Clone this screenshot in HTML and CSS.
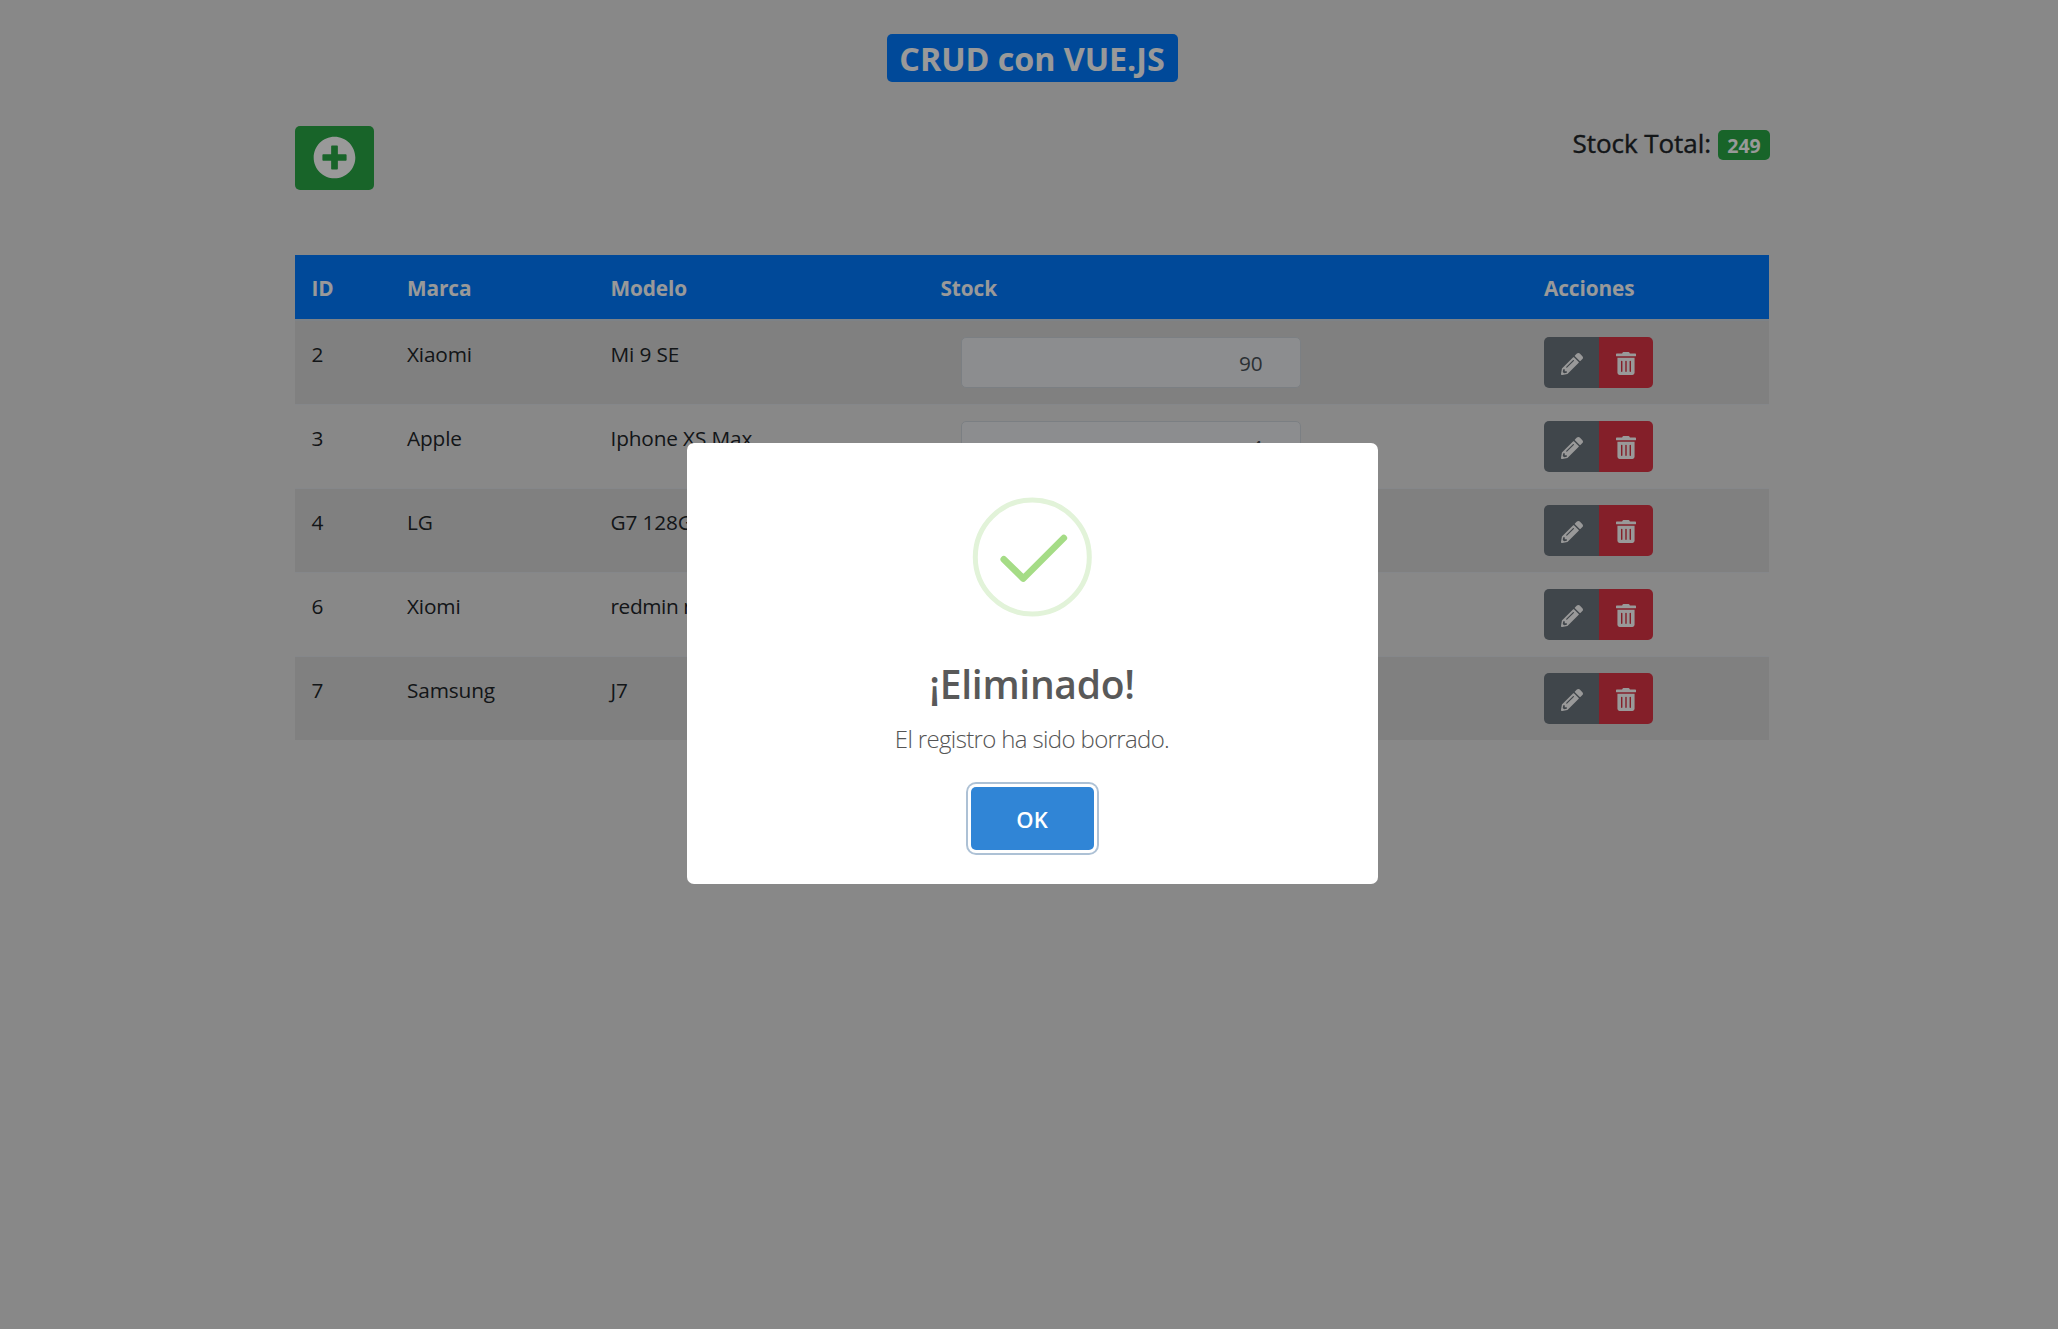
FILE: index.html
```
<!DOCTYPE html>
<html lang="es">
<head>
<meta charset="utf-8">
<title>CRUD con VUE.JS</title>
<link rel="stylesheet" href="styles.css">
</head>
<body>
<svg class="sprite" aria-hidden="true">
  <symbol id="plus" viewBox="0 0 512 512"><path d="M256 8C119 8 8 119 8 256s111 248 248 248 248-111 248-248S393 8 256 8zm144 276c0 6.6-5.4 12-12 12h-92v92c0 6.6-5.4 12-12 12h-56c-6.6 0-12-5.4-12-12v-92h-92c-6.6 0-12-5.4-12-12v-56c0-6.6 5.4-12 12-12h92v-92c0-6.6 5.4-12 12-12h56c6.6 0 12 5.4 12 12v92h92c6.6 0 12 5.4 12 12v56z"/></symbol>
  <symbol id="pencil" viewBox="0 0 512 512"><path d="M497.9 142.1l-46.1 46.1c-4.7 4.7-12.3 4.7-17 0l-111-111c-4.7-4.7-4.7-12.3 0-17l46.1-46.1c18.7-18.7 49.1-18.7 67.9 0l60.1 60.1c18.8 18.7 18.8 49.1 0 67.9zM284.2 99.8L21.6 362.4.4 483.9c-2.9 16.4 11.4 30.6 27.8 27.8l121.5-21.3 262.6-262.6c4.7-4.7 4.7-12.3 0-17l-111-111c-4.8-4.7-12.4-4.7-17.1 0zM124.1 339.9c-5.5-5.5-5.5-14.3 0-19.8l154-154c5.5-5.5 14.3-5.5 19.8 0s5.5 14.3 0 19.8l-154 154c-5.5 5.5-14.3 5.5-19.8 0zM88 424h48v36.3l-64.5 11.3-31.1-31.1L51.7 376H88v48z"/></symbol>
  <symbol id="trash" viewBox="0 0 448 512"><path d="M32 464a48 48 0 0 0 48 48h288a48 48 0 0 0 48-48V128H32zm272-256a16 16 0 0 1 32 0v224a16 16 0 0 1-32 0zm-96 0a16 16 0 0 1 32 0v224a16 16 0 0 1-32 0zm-96 0a16 16 0 0 1 32 0v224a16 16 0 0 1-32 0zM432 32H312l-9.4-18.7A24 24 0 0 0 281.1 0H166.8a23.7 23.7 0 0 0-21.4 13.3L136 32H16A16 16 0 0 0 0 48v32a16 16 0 0 0 16 16h416a16 16 0 0 0 16-16V48a16 16 0 0 0-16-16z"/></symbol>
</svg>
<main class="container">
  <h1 class="title"><span class="title-badge">CRUD con VUE.JS</span></h1>
  <div class="toolbar">
    <button class="add"><svg><use href="#plus"/></svg></button>
    <div class="total"><span class="total-label">Stock Total:</span><span class="total-badge">249</span></div>
  </div>
  <div class="table">
    <div class="row head"><div>ID</div><div>Marca</div><div>Modelo</div><div>Stock</div><div>Acciones</div></div>
    <div class="row odd"><div>2</div><div>Xiaomi</div><div>Mi 9 SE</div><div><span class="field">90</span></div><div class="actions"><button class="edit"><svg><use href="#pencil"/></svg></button><button class="delete"><svg><use href="#trash"/></svg></button></div></div>
    <div class="row"><div>3</div><div>Apple</div><div>Iphone XS Max</div><div><span class="field">4</span></div><div class="actions"><button class="edit"><svg><use href="#pencil"/></svg></button><button class="delete"><svg><use href="#trash"/></svg></button></div></div>
    <div class="row odd"><div>4</div><div>LG</div><div>G7 128GB</div><div><span class="field"></span></div><div class="actions"><button class="edit"><svg><use href="#pencil"/></svg></button><button class="delete"><svg><use href="#trash"/></svg></button></div></div>
    <div class="row"><div>6</div><div>Xiomi</div><div class="tight">redmin n</div><div><span class="field"></span></div><div class="actions"><button class="edit"><svg><use href="#pencil"/></svg></button><button class="delete"><svg><use href="#trash"/></svg></button></div></div>
    <div class="row odd"><div>7</div><div>Samsung</div><div>J7</div><div><span class="field"></span></div><div class="actions"><button class="edit"><svg><use href="#pencil"/></svg></button><button class="delete"><svg><use href="#trash"/></svg></button></div></div>
  </div>
</main>
<div class="backdrop">
  <section class="dialog" role="dialog">
    <svg class="success" viewBox="0 0 120 120"><circle cx="60.3" cy="60" r="57"/><path d="M31.8 62.3L51.3 81.5L91.8 41"/></svg>
    <h2><span>¡Eliminado!</span></h2>
    <p><span>El registro ha sido borrado.</span></p>
    <button class="ok">OK</button>
  </section>
</div>
</body>
</html>
```
FILE: styles.css
```
* { box-sizing: border-box; }
html { overflow: hidden; }
body {
  margin: 0;
  width: 2064px;
  height: 1329px;
  overflow: hidden;
  background: #e3e3e3;
  color: #212529;
  font: 20.8px/32px "Open Sans", "Noto Sans", sans-serif;
}
button { border: 0; padding: 0; font: inherit; color: #fff; }
svg { display: block; fill: currentColor; }
.sprite { width: 0; height: 0; position: absolute; }
.container { width: 1474px; margin: 0 auto; padding-top: 34px; }
.title { display: flex; justify-content: center; margin: 0; }
.title-badge {
  width: 291px;
  height: 48px;
  border-radius: 5px;
  background: #007bff;
  color: #fff;
  font-size: 32.3px;
  font-weight: 700;
  line-height: 48px;
  letter-spacing: -0.05px;
  text-align: center;
  white-space: nowrap;
}
.toolbar { display: flex; justify-content: space-between; align-items: flex-start; margin-top: 44px; height: 129px; }
.add {
  width: 79px;
  height: 64px;
  border-radius: 5px;
  background: #28a745;
  display: flex;
  justify-content: center;
  padding-top: 9.5px;
}
.add svg { width: 43px; height: 43px; }
.total { display: flex; gap: 7px; padding-top: 1px; margin-right: -1px; }
.total-label { font-size: 26px; font-weight: 500; line-height: 32px; letter-spacing: -0.05px; white-space: nowrap; -webkit-text-stroke: 0.4px; }
.total-badge {
  width: 52px;
  height: 30px;
  margin-top: 3px;
  border-radius: 5px;
  background: #28a745;
  color: #fff;
  font-size: 19.5px;
  font-weight: 700;
  line-height: 32px;
  text-align: center;
}
.row {
  display: grid;
  grid-template-columns: 95.5px 203.5px 330px 603.5px 1fr;
  height: 84px;
  padding-left: 16.5px;
  padding-top: 17px;
  border-top: 1px solid #dee2e6;
  letter-spacing: -0.15px;
}
.row.odd { background: #d6d6d6; }
.row.head {
  height: 66px;
  padding-top: 17px;
  border-top: 0;
  border-bottom: 2px solid #d0d9e2;
  background: #007bff;
  background-clip: padding-box;
  color: #fff;
  font-weight: 700;
  letter-spacing: -0.1px;
}
.row.head + .row { height: 83px; border-top: 0; }
.tight { letter-spacing: -0.4px; }
.field {
  display: block;
  width: 340px;
  height: 51px;
  margin: -1px 0 0 20px;
  padding: 9px 37px 0 0;
  border: 1px solid #ced4da;
  border-radius: 5px;
  background: #e9ecef;
  color: #495057;
  text-align: right;
}
.actions { display: flex; margin-top: -1px; }
.actions button { height: 51px; display: flex; align-items: center; justify-content: center; padding-top: 2px; }
.edit { width: 55px; background: #6c757d; border-radius: 5px 0 0 5px; }
.delete { width: 54px; background: #dc3545; border-radius: 0 5px 5px 0; }
.edit svg { width: 22px; height: 22px; }
.delete svg { width: 20px; height: 23px; }
.backdrop {
  position: fixed;
  top: 0;
  left: 0;
  width: 2064px;
  height: 1329px;
  padding-top: 443px;
  background: rgba(0, 0, 0, 0.4);
}
.dialog {
  width: 691px;
  height: 441px;
  margin: 0 auto;
  padding-top: 54px;
  border-radius: 7px;
  background: #fff;
  display: flex;
  flex-direction: column;
  align-items: center;
}
.success { width: 120px; height: 120px; fill: none; }
.success circle { stroke: #e2f3d9; stroke-width: 5; }
.success path { stroke: #a5dc86; stroke-width: 6.7; stroke-linecap: round; stroke-linejoin: round; }
h2 { margin: 38px 0 0; color: #595959; font-size: 39px; font-weight: 600; line-height: 58px; letter-spacing: -0.3px; }
p { margin: 10px 0 0; color: #545454; font-size: 24px; font-weight: 300; line-height: 32px; letter-spacing: -0.64px; white-space: nowrap; }
.ok {
  width: 123px;
  height: 63px;
  margin-top: 32px;
  border-radius: 5px;
  background: #3085d6;
  font-size: 22px;
  font-weight: 600;
  box-shadow: 0 0 0 3px #fff, 0 0 0 5px #adc1d5;
}
```
